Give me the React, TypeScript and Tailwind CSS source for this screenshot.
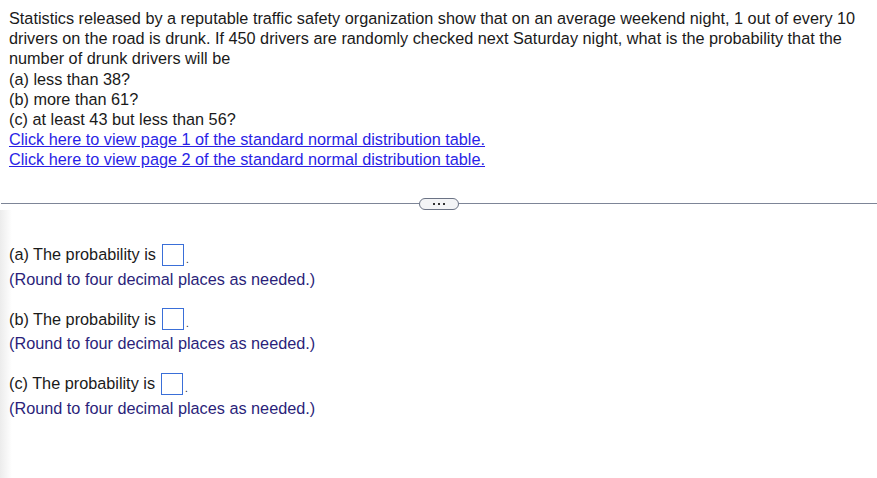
import React from 'react';

const parts = [
  { label: '(a)' },
  { label: '(b)' },
  { label: '(c)' },
];

const AnswerRow: React.FC<{ label: string }> = ({ label }) => (
  <div className="mb-[16.5px]">
    <div className="flex items-center h-[24px]">
      <span>{label} The probability is</span>
      <span className="ml-[6px] inline-block w-[22px] h-[22px] border border-[#3a6fd8] bg-white"></span>
      <span className="ml-[2px] text-[10px] leading-none mt-[10px]">.</span>
    </div>
    <div className="text-[#2b1f7a] leading-[24px]">(Round to four decimal places as needed.)</div>
  </div>
);

export default function App() {
  return (
    <div className="w-[877px] h-[478px] bg-white text-[#1a1a1a] text-[16.25px] overflow-hidden" style={{ fontFamily: 'Arial, "Liberation Sans", sans-serif' }}>
      <div className="px-[9px] pt-[8px] leading-[20.2px] whitespace-nowrap">
        <p>
          Statistics released by a reputable traffic safety organization show that on an average weekend night, 1 out of every 10
          <br />
          drivers on the road is drunk. If 450 drivers are randomly checked next Saturday night, what is the probability that the
          <br />
          number of drunk drivers will be
        </p>
        <p>(a) less than 38?</p>
        <p>(b) more than 61?</p>
        <p>(c) at least 43 but less than 56?</p>
        <p><a href="#" className="text-[#2a1fe6] underline">Click here to view page 1 of the standard normal distribution table.</a></p>
        <p><a href="#" className="text-[#2a1fe6] underline">Click here to view page 2 of the standard normal distribution table.</a></p>
      </div>

      <div className="mt-[28px] flex items-center pl-[1px]">
        <div className="flex-1 h-px bg-[#7d8597]"></div>
        <div className="w-[40px] h-[12px] rounded-full border border-[#6b7385] bg-[#f3f4f6] flex items-center justify-center gap-[3px]">
          <span className="w-[2px] h-[2px] bg-[#333]"></span>
          <span className="w-[2px] h-[2px] bg-[#333]"></span>
          <span className="w-[2px] h-[2px] bg-[#333]"></span>
        </div>
        <div className="flex-1 h-px bg-[#7d8597]"></div>
      </div>

      <div className="flex h-[272px]">
        <div className="w-[12px] bg-gradient-to-r from-[#ececec] to-white shrink-0"></div>
        <div className="pt-[33px] -ml-[3px]">
          {parts.map((p) => (
            <AnswerRow key={p.label} label={p.label} />
          ))}
        </div>
      </div>
    </div>
  );
}
